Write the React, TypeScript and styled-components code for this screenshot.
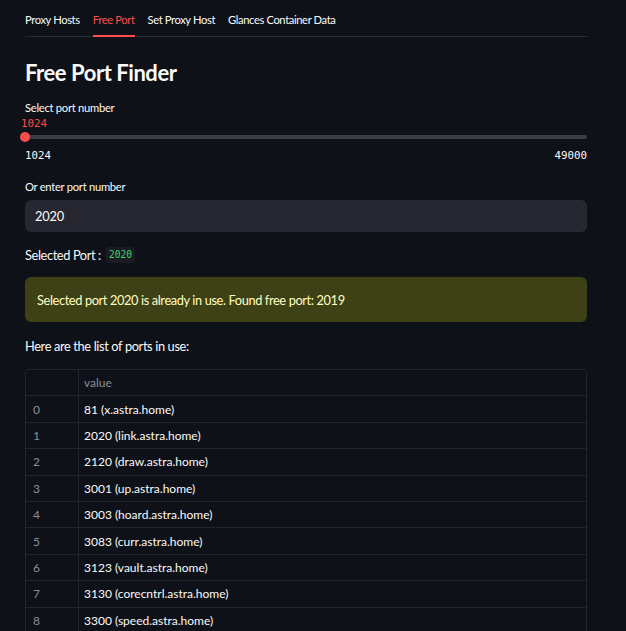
import React from "react";
import styled, { createGlobalStyle } from "styled-components";

const SANS = `"Lato", "Noto Sans", sans-serif`;
const MONO = `"DejaVu Sans Mono", "Liberation Mono", monospace`;

const Global = createGlobalStyle`
  html, body {
    margin: 0;
    padding: 0;
    background: #0e1117;
    overflow: hidden;
  }
  body {
    font-family: ${SANS};
    color: #fafafa;
  }
  * { box-sizing: border-box; }
`;

const Page = styled.div`
  width: 626px;
  min-height: 631px;
  padding: 0 39px 0 25px;
  background: #0e1117;
  display: flex;
  flex-direction: column;
`;

const TabList = styled.div`
  display: flex;
  gap: 13px;
  height: 37px;
  align-items: flex-end;
  border-bottom: 1px solid #2a2c34;
`;

const Tab = styled.div<{ $active?: boolean }>`
  font-size: 11.2px;
  letter-spacing: -0.38px;
  line-height: 16px;
  padding-bottom: 7px;
  margin-bottom: -1px;
  color: ${(p) => (p.$active ? "#ff4b4b" : "#fafafa")};
  border-bottom: 2px solid ${(p) => (p.$active ? "#ff4b4b" : "transparent")};
  white-space: nowrap;
`;

const Title = styled.h2`
  margin: 22px 0 0;
  font-size: 22px;
  letter-spacing: -0.45px;
  line-height: 28px;
  font-weight: 700;
  color: #fafafa;
`;

const Label = styled.div<{ $top: number }>`
  margin-top: ${(p) => p.$top}px;
  font-size: 11.2px;
  letter-spacing: -0.27px;
  line-height: 14px;
  color: #fafafa;
`;

const SliderValue = styled.div`
  margin-top: 3px;
  margin-left: -4px;
  font-family: ${MONO};
  font-size: 10.8px;
  line-height: 12px;
  color: #ff4b4b;
`;

const Track = styled.div`
  margin-top: 2px;
  height: 10px;
  display: flex;
  align-items: center;
`;

const Thumb = styled.div`
  width: 10px;
  height: 10px;
  border-radius: 50%;
  background: #ff4b4b;
  margin-left: -5px;
  flex: none;
  position: relative;
  z-index: 1;
`;

const Rail = styled.div`
  flex: 1;
  height: 4px;
  border-radius: 2px;
  background: #3b3d46;
  margin-left: -5px;
`;

const MinMax = styled.div`
  margin-top: 8px;
  display: flex;
  justify-content: space-between;
  font-family: ${MONO};
  font-size: 10.8px;
  line-height: 12px;
  color: #fafafa;
`;

const Input = styled.div`
  margin-top: 6px;
  height: 32px;
  border-radius: 6px;
  background: #262730;
  padding: 0 10px;
  display: flex;
  align-items: center;
  font-size: 12.8px;
  letter-spacing: -0.2px;
  color: #fafafa;
`;

const SelectedRow = styled.div`
  margin-top: 15px;
  height: 16px;
  display: flex;
  align-items: center;
  gap: 5px;
  font-size: 12.8px;
  letter-spacing: -0.38px;
`;

const Code = styled.code`
  font-family: ${MONO};
  font-size: 9.6px;
  letter-spacing: 0;
  line-height: 16px;
  padding: 0 3px;
  border-radius: 3px;
  background: #1a1c24;
  color: #3dd56d;
`;

const Warning = styled.div`
  margin-top: 14px;
  height: 45px;
  border-radius: 6px;
  background: #3e4016;
  color: #ffffc2;
  padding: 0 12px;
  display: flex;
  align-items: center;
  font-size: 12.8px;
  letter-spacing: -0.38px;
`;

const Text = styled.p`
  margin: 16px 0 0;
  font-size: 12.8px;
  letter-spacing: -0.36px;
  line-height: 16px;
`;

const Table = styled.div`
  margin-top: 15px;
  border: 1px solid #22252c;
  border-bottom: none;
  border-radius: 5px 5px 0 0;
  display: grid;
  grid-template-columns: 53px 1fr;
`;

const Cell = styled.div<{ $head?: boolean; $index?: boolean }>`
  height: 26.4px;
  display: flex;
  align-items: center;
  padding-left: ${(p) => (p.$index ? 7 : 5)}px;
  font-size: 12px;
  color: ${(p) => (p.$head || p.$index ? "#8b8e98" : "#fafafa")};
  border-bottom: 1px solid #22252c;
  border-right: ${(p) => (p.$index ? "1px solid #22252c" : "none")};
`;

const rows = [
  "81 (x.astra.home)",
  "2020 (link.astra.home)",
  "2120 (draw.astra.home)",
  "3001 (up.astra.home)",
  "3003 (hoard.astra.home)",
  "3083 (curr.astra.home)",
  "3123 (vault.astra.home)",
  "3130 (corecntrl.astra.home)",
  "3300 (speed.astra.home)",
];

export default function App() {
  return (
    <>
      <Global />
      <Page>
        <TabList>
          <Tab>Proxy Hosts</Tab>
          <Tab $active>Free Port</Tab>
          <Tab>Set Proxy Host</Tab>
          <Tab>Glances Container Data</Tab>
        </TabList>
        <Title>Free Port Finder</Title>
        <Label $top={14}>Select port number</Label>
        <SliderValue>1024</SliderValue>
        <Track>
          <Thumb />
          <Rail />
        </Track>
        <MinMax>
          <span>1024</span>
          <span>49000</span>
        </MinMax>
        <Label $top={18}>Or enter port number</Label>
        <Input>2020</Input>
        <SelectedRow>
          <span>Selected Port :</span>
          <Code>2020</Code>
        </SelectedRow>
        <Warning>Selected port 2020 is already in use. Found free port: 2019</Warning>
        <Text>Here are the list of ports in use:</Text>
        <Table>
          <Cell $index />
          <Cell $head>value</Cell>
          {rows.map((r, i) => (
            <React.Fragment key={i}>
              <Cell $index>{i}</Cell>
              <Cell>{r}</Cell>
            </React.Fragment>
          ))}
        </Table>
      </Page>
    </>
  );
}
